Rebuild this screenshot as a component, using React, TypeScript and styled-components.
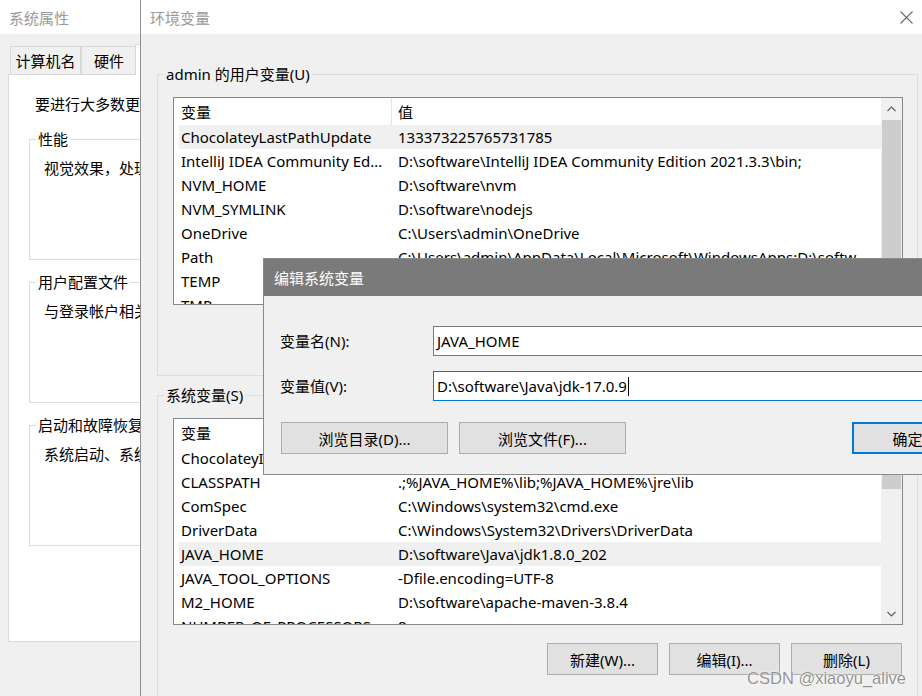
import styled, { createGlobalStyle } from "styled-components";

const UI_FONT = `"Noto Sans", "Noto Sans CJK SC", sans-serif`;

type EnvVar = { name: string; value: string; selected?: boolean };

const userVars: EnvVar[] = [
    { name: "ChocolateyLastPathUpdate", value: "133373225765731785", selected: true },
    { name: "IntelliJ IDEA Community Edition", value: "D:\\software\\IntelliJ IDEA Community Edition 2021.3.3\\bin;" },
    { name: "NVM_HOME", value: "D:\\software\\nvm" },
    { name: "NVM_SYMLINK", value: "D:\\software\\nodejs" },
    { name: "OneDrive", value: "C:\\Users\\admin\\OneDrive" },
    { name: "Path", value: "C:\\Users\\admin\\AppData\\Local\\Microsoft\\WindowsApps;D:\\software\\nvm;D:\\software\\nodejs" },
    { name: "TEMP", value: "%USERPROFILE%\\AppData\\Local\\Temp" },
    { name: "TMP", value: "%USERPROFILE%\\AppData\\Local\\Temp" },
];

const systemVars: EnvVar[] = [
    { name: "ChocolateyInstall", value: "C:\\ProgramData\\chocolatey" },
    { name: "CLASSPATH", value: ".;%JAVA_HOME%\\lib;%JAVA_HOME%\\jre\\lib" },
    { name: "ComSpec", value: "C:\\Windows\\system32\\cmd.exe" },
    { name: "DriverData", value: "C:\\Windows\\System32\\Drivers\\DriverData" },
    { name: "JAVA_HOME", value: "D:\\software\\Java\\jdk1.8.0_202", selected: true },
    { name: "JAVA_TOOL_OPTIONS", value: "-Dfile.encoding=UTF-8" },
    { name: "M2_HOME", value: "D:\\software\\apache-maven-3.8.4" },
    { name: "NUMBER_OF_PROCESSORS", value: "8" },
];

const GlobalStyle = createGlobalStyle`
    html, body {
        margin: 0;
        padding: 0;
        background: #f0f0f0;
    }
    body {
        font-family: ${UI_FONT};
        font-size: 15px;
        color: #000;
    }
`;

const Desktop = styled.div`
    position: relative;
    width: 922px;
    height: 696px;
    overflow: hidden;
    background: #f0f0f0;
`;

/* ---------- shared window chrome ---------- */

const TitleBar = styled.div`
    height: 34px;
    flex-shrink: 0;
    display: flex;
    align-items: center;
    padding-left: 9px;
    background: #fff;
    color: #9a9a9a;
    font-size: 15px;
`;

const TitleText = styled.span`
    flex: 1;
`;

const CloseButton = styled.div`
    width: 26px;
    height: 34px;
    flex-shrink: 0;
    display: flex;
    align-items: center;
    justify-content: center;
    margin-right: 3px;
`;

const Group = styled.fieldset<{ $height?: number }>`
    margin: 0;
    padding: 0;
    min-width: 0;
    border: 1px solid #dcdcdc;
    ${(p) => (p.$height ? `height: ${p.$height}px;` : "")}
    box-sizing: border-box;
`;

const Legend = styled.legend`
    margin-left: 6px;
    padding: 0 2px;
    line-height: 20px;
    font-size: 15px;
`;

const Button = styled.button<{ $width: number; $default?: boolean }>`
    width: ${(p) => p.$width}px;
    height: 32px;
    flex-shrink: 0;
    box-sizing: border-box;
    background: #e1e1e1;
    border: ${(p) => (p.$default ? "2px solid #0078d7" : "1px solid #adadad")};
    font-family: ${UI_FONT};
    font-size: 15px;
    color: #000;
    padding: 0;
`;

/* ---------- 系统属性 (back window) ---------- */

const SysWindow = styled.div`
    position: absolute;
    z-index: 1;
    left: 0;
    top: 0;
    width: 420px;
    height: 696px;
    display: flex;
    flex-direction: column;
    background: #f0f0f0;
`;

const SysBody = styled.div`
    padding: 10px 0 0 8px;
    display: flex;
    flex-direction: column;
`;

const TabStrip = styled.div`
    display: flex;
    align-items: flex-end;
    height: 31px;
    padding-left: 2px;
    margin-bottom: -1px;
`;

const Tab = styled.div<{ $width: number; $active?: boolean }>`
    width: ${(p) => p.$width}px;
    height: ${(p) => (p.$active ? 31 : 29)}px;
    box-sizing: border-box;
    display: flex;
    align-items: center;
    justify-content: center;
    border: 1px solid #d9d9d9;
    border-bottom: ${(p) => (p.$active ? "none" : "1px solid #d9d9d9")};
    margin-left: ${(p) => (p.$active ? -2 : 0)}px;
    background: ${(p) => (p.$active ? "#fff" : "#f0f0f0")};
    position: relative;
    z-index: ${(p) => (p.$active ? 1 : 0)};
    & + & {
        border-left: ${(p) => (p.$active ? "1px solid #d9d9d9" : "none")};
    }
`;

const TabPanel = styled.div`
    height: 568px;
    box-sizing: border-box;
    border: 1px solid #d9d9d9;
    background: #fff;
    padding: 19px 0 0 20px;
    display: flex;
    flex-direction: column;
    gap: 12px;
`;

const IntroText = styled.div`
    margin: 0 0 3px 6px;
    line-height: 20px;
    white-space: nowrap;
`;

const GroupText = styled.div`
    padding: 9px 0 0 14px;
    line-height: 20px;
    white-space: nowrap;
`;

/* ---------- 环境变量 window ---------- */

const EnvWindow = styled.div`
    position: absolute;
    z-index: 2;
    left: 140px;
    right: 0;
    top: 0;
    bottom: 0;
    display: flex;
    flex-direction: column;
    background: #f0f0f0;
    border-left: 1px solid #8f8f8f;
`;

const EnvBody = styled.div`
    padding: 30px 4px 0 16px;
    display: flex;
    flex-direction: column;
    gap: 9px;
`;

const GroupInner = styled.div<{ $bottom: number }>`
    padding: 13px 14px ${(p) => p.$bottom}px 15px;
    display: flex;
    flex-direction: column;
`;

const ListFrame = styled.div<{ $height: number }>`
    display: flex;
    height: ${(p) => p.$height}px;
    box-sizing: border-box;
    border: 1px solid #828790;
    background: #fff;
`;

const ListBody = styled.div`
    flex: 1;
    min-width: 0;
    overflow: hidden;
`;

const HeaderRow = styled.div`
    display: flex;
    height: 27px;
    align-items: center;
`;

const HeaderCell = styled.div<{ $first?: boolean }>`
    height: 100%;
    display: flex;
    align-items: center;
    box-sizing: border-box;
    ${(p) => (p.$first ? "width: 218px; padding-left: 7px; border-right: 1px solid #e5e5e5;" : "flex: 1; padding-left: 6px;")}
`;

const Row = styled.div<{ $selected?: boolean }>`
    display: flex;
    height: 24px;
    align-items: center;
    margin-left: 5px;
    line-height: 20px;
    background: ${(p) => (p.$selected ? "#f0f0f0" : "transparent")};
`;

const NameCell = styled.div`
    width: 212px;
    flex-shrink: 0;
    box-sizing: border-box;
    padding: 0 7px 0 2px;
    white-space: nowrap;
    overflow: hidden;
    text-overflow: ellipsis;
`;

const ValueCell = styled.div`
    flex: 1;
    min-width: 0;
    padding: 0 6px 0 7px;
    white-space: nowrap;
    overflow: hidden;
    text-overflow: ellipsis;
`;

const ScrollTrack = styled.div`
    width: 21px;
    flex-shrink: 0;
    background: #f0f0f0;
    display: flex;
    flex-direction: column;
`;

const ScrollArrow = styled.div`
    height: 21px;
    flex-shrink: 0;
    display: flex;
    align-items: center;
    justify-content: center;
`;

const ScrollThumb = styled.div<{ $offset: number; $size: number }>`
    margin: ${(p) => p.$offset}px 1px 0;
    height: ${(p) => p.$size}px;
    flex-shrink: 0;
    background: #cdcdcd;
`;

const ScrollGap = styled.div`
    flex: 1;
`;

const ButtonRow = styled.div`
    display: flex;
    justify-content: flex-end;
    gap: 11px;
    margin: 18px 1px 0 0;
`;

/* ---------- 编辑系统变量 dialog ---------- */

const EditDialog = styled.div`
    position: absolute;
    z-index: 3;
    left: 263px;
    top: 258px;
    width: 840px;
    height: 217px;
    box-sizing: border-box;
    border: 1px solid #8a8a8a;
    background: #f0f0f0;
    display: flex;
    flex-direction: column;
`;

const DialogTitle = styled.div`
    height: 37px;
    flex-shrink: 0;
    display: flex;
    align-items: center;
    padding-left: 10px;
    background: #7a7a7a;
    color: #fff;
`;

const DialogBody = styled.div`
    padding: 30px 17px 0 16px;
    display: flex;
    flex-direction: column;
    gap: 15px;
`;

const FieldRow = styled.div`
    display: flex;
    align-items: center;
`;

const FieldLabel = styled.div`
    width: 153px;
    flex-shrink: 0;
    margin-top: -1px;
`;

const TextBox = styled.div<{ $focused?: boolean }>`
    flex: 1;
    height: 30px;
    box-sizing: border-box;
    display: flex;
    align-items: center;
    padding-left: 3px;
    background: #fff;
    border: 1px solid ${(p) => (p.$focused ? "#0078d7" : "#7a7a7a")};
    white-space: nowrap;
`;

const Caret = styled.span`
    display: inline-block;
    width: 1px;
    height: 19px;
    background: #000;
    margin-left: 1px;
`;

const DialogButtons = styled.div`
    display: flex;
    gap: 11px;
    margin: 6px 0 0 1px;
`;

const PushRight = styled.div`
    margin-left: auto;
    display: flex;
    gap: 11px;
`;

const Watermark = styled.div`
    position: absolute;
    z-index: 4;
    right: 16px;
    bottom: 8px;
    font-family: "Liberation Sans", Arial, sans-serif;
    font-size: 16.5px;
    color: rgba(125, 125, 125, 0.85);
    text-shadow: 0 0 2px #fff, 0 0 1px #fff;
`;

const Chevron = ({ up }: { up?: boolean }) => (
    <svg width="9" height="6" viewBox="0 0 9 6">
        <polyline
            points={up ? "0.5,5 4.5,1 8.5,5" : "0.5,1 4.5,5 8.5,1"}
            fill="none"
            stroke="#606060"
            strokeWidth="1.2"
        />
    </svg>
);

const CloseIcon = () => (
    <svg width="13" height="13" viewBox="0 0 13 13" style={{ display: "block", flexShrink: 0 }}>
        <path d="M0.5 0.5 L12.5 12.5 M12.5 0.5 L0.5 12.5" stroke="#6a6a6a" strokeWidth="1.1" fill="none" />
    </svg>
);

const VarList = ({
    rows,
    height,
    thumbOffset,
    thumbSize,
}: {
    rows: EnvVar[];
    height: number;
    thumbOffset: number;
    thumbSize: number;
}) => (
    <ListFrame $height={height}>
        <ListBody>
            <HeaderRow>
                <HeaderCell $first>变量</HeaderCell>
                <HeaderCell>值</HeaderCell>
            </HeaderRow>
            {rows.map((r) => (
                <Row key={r.name} $selected={r.selected}>
                    <NameCell>{r.name}</NameCell>
                    <ValueCell>{r.value}</ValueCell>
                </Row>
            ))}
        </ListBody>
        <ScrollTrack>
            <ScrollArrow>
                <Chevron up />
            </ScrollArrow>
            <ScrollThumb $offset={thumbOffset} $size={thumbSize} />
            <ScrollGap />
            <ScrollArrow>
                <Chevron />
            </ScrollArrow>
        </ScrollTrack>
    </ListFrame>
);

export default function App() {
    return (
        <Desktop>
            <GlobalStyle />

            <SysWindow>
                <TitleBar>
                    <TitleText>系统属性</TitleText>
                </TitleBar>
                <SysBody>
                    <TabStrip>
                        <Tab $width={71}>计算机名</Tab>
                        <Tab $width={56}>硬件</Tab>
                        <Tab $width={60} $active>高级</Tab>
                    </TabStrip>
                    <TabPanel>
                        <IntroText>要进行大多数更改，你必须作为管理员登录。</IntroText>
                        <Group $height={131}>
                            <Legend>性能</Legend>
                            <GroupText>视觉效果，处理器计划，内存使用，以及虚拟内存</GroupText>
                        </Group>
                        <Group $height={131}>
                            <Legend>用户配置文件</Legend>
                            <GroupText>与登录帐户相关的桌面设置</GroupText>
                        </Group>
                        <Group $height={131}>
                            <Legend>启动和故障恢复</Legend>
                            <GroupText>系统启动、系统故障和调试信息</GroupText>
                        </Group>
                    </TabPanel>
                </SysBody>
            </SysWindow>

            <EnvWindow>
                <TitleBar>
                    <TitleText>环境变量</TitleText>
                    <CloseButton>
                        <CloseIcon />
                    </CloseButton>
                </TitleBar>
                <EnvBody>
                    <Group>
                        <Legend>admin 的用户变量(U)</Legend>
                        <GroupInner $bottom={70}>
                            <VarList rows={userVars} height={208} thumbOffset={1} thumbSize={165} />
                        </GroupInner>
                    </Group>
                    <Group>
                        <Legend>系统变量(S)</Legend>
                        <GroupInner $bottom={40}>
                            <VarList rows={systemVars} height={207} thumbOffset={0} thumbSize={49} />
                            <ButtonRow>
                                <Button $width={111}>新建(W)...</Button>
                                <Button $width={111}>编辑(I)...</Button>
                                <Button $width={111}>删除(L)</Button>
                            </ButtonRow>
                        </GroupInner>
                    </Group>
                </EnvBody>
            </EnvWindow>

            <EditDialog>
                <DialogTitle>编辑系统变量</DialogTitle>
                <DialogBody>
                    <FieldRow>
                        <FieldLabel>变量名(N):</FieldLabel>
                        <TextBox>JAVA_HOME</TextBox>
                    </FieldRow>
                    <FieldRow>
                        <FieldLabel>变量值(V):</FieldLabel>
                        <TextBox $focused>
                            D:\software\Java\jdk-17.0.9
                            <Caret />
                        </TextBox>
                    </FieldRow>
                    <DialogButtons>
                        <Button $width={167}>浏览目录(D)...</Button>
                        <Button $width={167}>浏览文件(F)...</Button>
                        <PushRight>
                            <Button $width={111} $default>
                                确定
                            </Button>
                            <Button $width={111}>取消</Button>
                        </PushRight>
                    </DialogButtons>
                </DialogBody>
            </EditDialog>

            <Watermark>CSDN @xiaoyu_alive</Watermark>
        </Desktop>
    );
}
